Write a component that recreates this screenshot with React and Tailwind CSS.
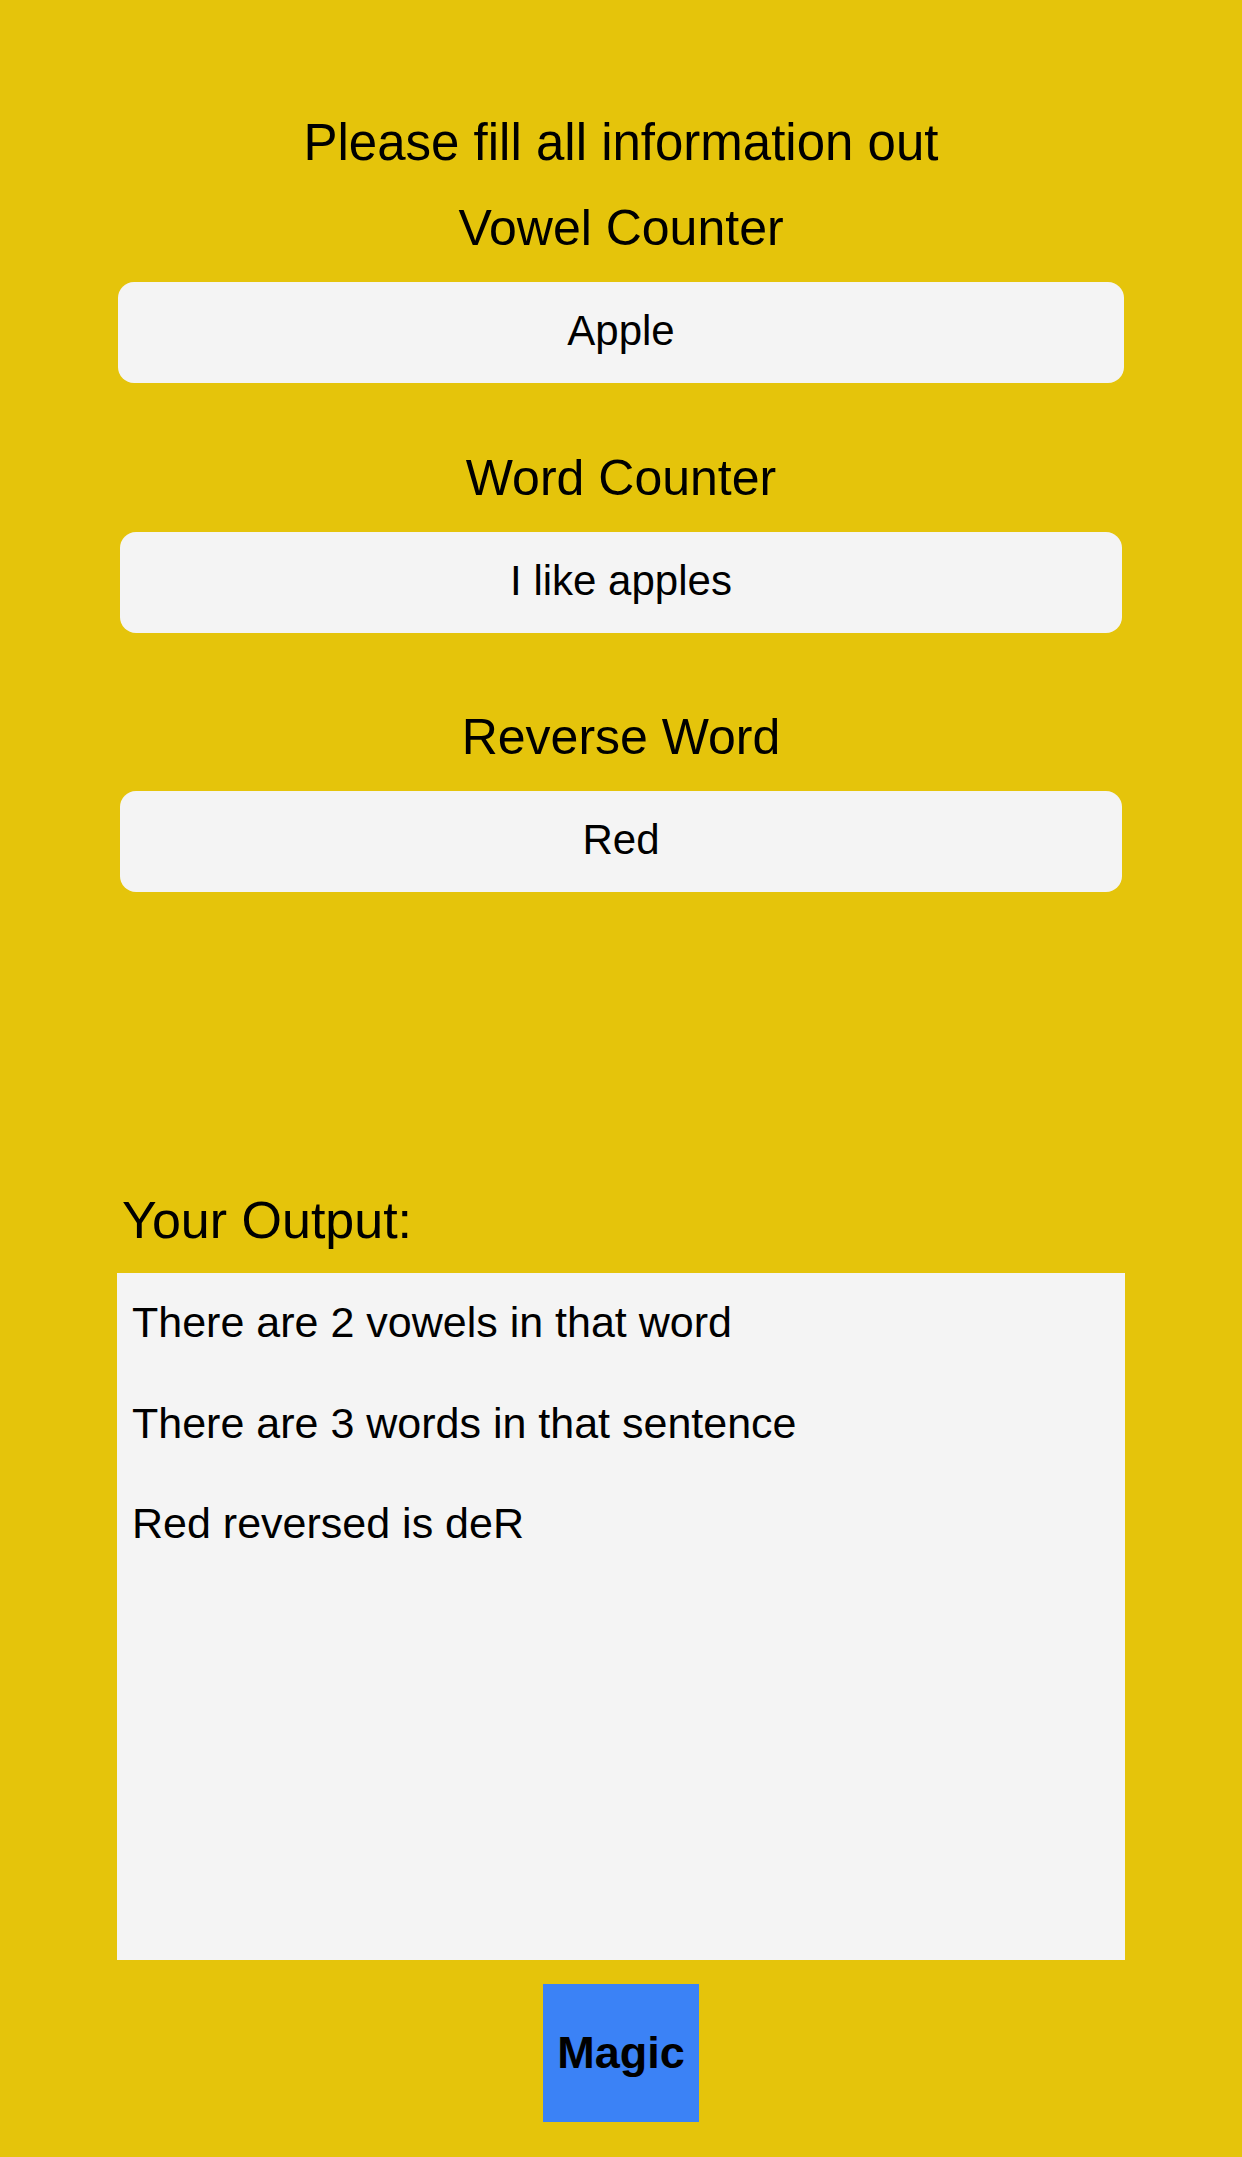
import { useState } from "react";

const font = { fontFamily: '"Liberation Sans", Arial, sans-serif' };

function Field({ label, value, labelClass, boxClass }) {
  return (
    <>
      <h2 className={`text-center text-[50px] leading-[60px] text-black ${labelClass}`}>{label}</h2>
      <div
        className={`mt-[24px] h-[101px] rounded-[16px] bg-[#f4f4f4] pt-[24px] text-center text-[42px] leading-[50px] text-black ${boxClass}`}
      >
        {value}
      </div>
    </>
  );
}

export default function App() {
  const [vowel] = useState("Apple");
  const [sentence] = useState("I like apples");
  const [word] = useState("Red");

  const vowels = (vowel.match(/[aeiou]/gi) || []).length;
  const words = sentence.trim().split(/\s+/).length;
  const reversed = word.split("").reverse().join("");

  return (
    <div className="min-h-screen bg-[#e5c40b] pt-[113px] pb-[36px]" style={font}>
      <h1 className="text-center text-[51px] leading-[60px] text-black">Please fill all information out</h1>

      <Field label="Vowel Counter" value={vowel} labelClass="mt-[25px]" boxClass="mx-[118px]" />
      <Field label="Word Counter" value={sentence} labelClass="mt-[65px]" boxClass="mx-[120px]" />
      <Field label="Reverse Word" value={word} labelClass="mt-[74px]" boxClass="mx-[120px]" />

      {/* Output */}
      <h2 className="mt-[298px] pl-[122px] text-[52px] leading-[60px] text-black">Your Output:</h2>
      <div className="mx-[117px] mt-[23px] h-[687px] bg-[#f4f4f4] px-[15px] pt-[24px] text-[43px] leading-[50px] text-black">
        <p>There are {vowels} vowels in that word</p>
        <p className="mt-[51px]">There are {words} words in that sentence</p>
        <p className="mt-[50px]">
          {word} reversed is {reversed}
        </p>
      </div>

      <div className="mt-[24px] flex justify-center">
        <button className="h-[138px] w-[156px] bg-[#3b82f6] text-[45px] font-bold text-black">Magic</button>
      </div>
    </div>
  );
}
